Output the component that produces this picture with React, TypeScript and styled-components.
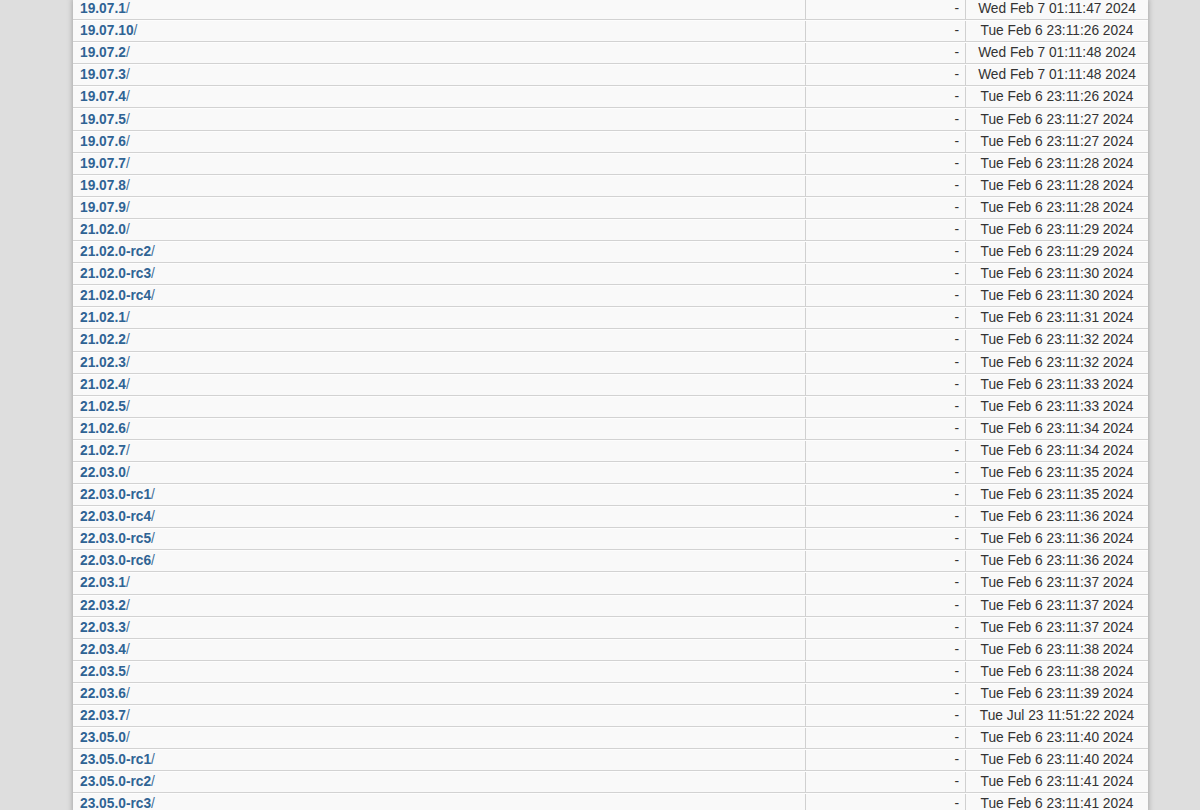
import React from "react";
import styled, { createGlobalStyle } from "styled-components";

const Global = createGlobalStyle`
  html, body { margin: 0; padding: 0; }
  body {
    background: #dedede;
    font-family: "Liberation Sans", Arial, Helvetica, sans-serif;
    color: #333;
    overflow: hidden;
  }
`;

const Page = styled.div`
  width: 1075px;
  margin: -2px 0 0 73px;
  background: #f9f9f9;
  box-shadow: 0 0 6px #9a9a9a;
`;

const Row = styled.div`
  display: grid;
  grid-template-columns: 733px 160px 182px;
  height: 22.1px;
  box-sizing: border-box;
  border-bottom: 1px solid #d2d2d2;
  border-top: 1px solid #fdfdfd;
  background: #f9f9f9;
`;

const Cell = styled.div<{ $align: "left" | "right" | "center"; $last?: boolean }>`
  display: flex;
  align-items: center;
  justify-content: ${(p) =>
    p.$align === "left" ? "flex-start" : p.$align === "right" ? "flex-end" : "center"};
  padding: 0 ${(p) => (p.$align === "right" ? "6px" : "7px")};
  font-size: 13.75px;
  line-height: 20px;
  border-right: ${(p) => (p.$last ? "none" : "1px solid #d0d0d0")};
  white-space: nowrap;
  overflow: hidden;
`;

const Link = styled.a`
  color: #2f6394;
  font-weight: bold;
  text-decoration: none;
`;

const Slash = styled.span`
  color: #42709b;
`;

const rows: [string, string][] = [
  ["19.07.1", "Wed Feb 7 01:11:47 2024"],
  ["19.07.10", "Tue Feb 6 23:11:26 2024"],
  ["19.07.2", "Wed Feb 7 01:11:48 2024"],
  ["19.07.3", "Wed Feb 7 01:11:48 2024"],
  ["19.07.4", "Tue Feb 6 23:11:26 2024"],
  ["19.07.5", "Tue Feb 6 23:11:27 2024"],
  ["19.07.6", "Tue Feb 6 23:11:27 2024"],
  ["19.07.7", "Tue Feb 6 23:11:28 2024"],
  ["19.07.8", "Tue Feb 6 23:11:28 2024"],
  ["19.07.9", "Tue Feb 6 23:11:28 2024"],
  ["21.02.0", "Tue Feb 6 23:11:29 2024"],
  ["21.02.0-rc2", "Tue Feb 6 23:11:29 2024"],
  ["21.02.0-rc3", "Tue Feb 6 23:11:30 2024"],
  ["21.02.0-rc4", "Tue Feb 6 23:11:30 2024"],
  ["21.02.1", "Tue Feb 6 23:11:31 2024"],
  ["21.02.2", "Tue Feb 6 23:11:32 2024"],
  ["21.02.3", "Tue Feb 6 23:11:32 2024"],
  ["21.02.4", "Tue Feb 6 23:11:33 2024"],
  ["21.02.5", "Tue Feb 6 23:11:33 2024"],
  ["21.02.6", "Tue Feb 6 23:11:34 2024"],
  ["21.02.7", "Tue Feb 6 23:11:34 2024"],
  ["22.03.0", "Tue Feb 6 23:11:35 2024"],
  ["22.03.0-rc1", "Tue Feb 6 23:11:35 2024"],
  ["22.03.0-rc4", "Tue Feb 6 23:11:36 2024"],
  ["22.03.0-rc5", "Tue Feb 6 23:11:36 2024"],
  ["22.03.0-rc6", "Tue Feb 6 23:11:36 2024"],
  ["22.03.1", "Tue Feb 6 23:11:37 2024"],
  ["22.03.2", "Tue Feb 6 23:11:37 2024"],
  ["22.03.3", "Tue Feb 6 23:11:37 2024"],
  ["22.03.4", "Tue Feb 6 23:11:38 2024"],
  ["22.03.5", "Tue Feb 6 23:11:38 2024"],
  ["22.03.6", "Tue Feb 6 23:11:39 2024"],
  ["22.03.7", "Tue Jul 23 11:51:22 2024"],
  ["23.05.0", "Tue Feb 6 23:11:40 2024"],
  ["23.05.0-rc1", "Tue Feb 6 23:11:40 2024"],
  ["23.05.0-rc2", "Tue Feb 6 23:11:41 2024"],
  ["23.05.0-rc3", "Tue Feb 6 23:11:41 2024"],
];

export default function App() {
  return (
    <>
      <Global />
      <Page>
        {rows.map(([name, date]) => (
          <Row key={name}>
            <Cell $align="left">
              <Link href="#">{name}</Link>
              <Slash>/</Slash>
            </Cell>
            <Cell $align="right">-</Cell>
            <Cell $align="center" $last>
              {date}
            </Cell>
          </Row>
        ))}
      </Page>
    </>
  );
}
